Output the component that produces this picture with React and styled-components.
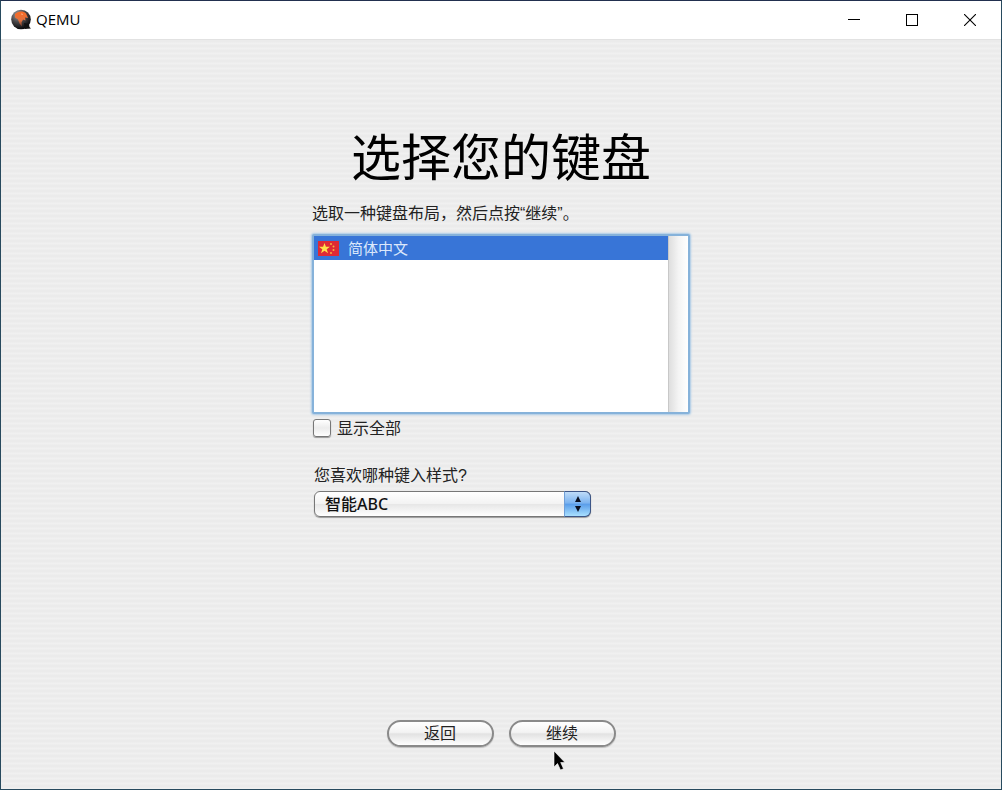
import React, { useState } from 'react';
import styled, { createGlobalStyle } from 'styled-components';

const GlobalStyle = createGlobalStyle`
  * {
    box-sizing: border-box;
  }

  body {
    margin: 0;
    font-family: "Open Sans", "Noto Sans CJK SC", sans-serif;
    font-size: 16px;
    color: #222;
  }
`;

const Window = styled.div`
  display: flex;
  flex-direction: column;
  min-height: 100vh;
  border: 1px solid #274a5e;
  border-top-color: #22304f;
`;

const TitleBar = styled.header`
  display: flex;
  align-items: center;
  height: 39px;
  padding: 0 2px 0 9px;
  background: #fff;
  border-bottom: 1px solid #e2e2e2;
`;

const AppName = styled.div`
  flex: 1;
  margin-left: 4px;
  padding-bottom: 2px;
  font-size: 15px;
  line-height: 20px;
  color: #000;
`;

const WindowButton = styled.button`
  display: flex;
  align-items: center;
  justify-content: center;
  width: 58px;
  height: 38px;
  padding: 0;
  border: 0;
  background: none;
`;

const Screen = styled.main`
  display: flex;
  flex: 1;
  flex-direction: column;
  align-items: center;
  padding: 84px 20px 42px;
  background: repeating-linear-gradient(#ebebeb 0 2px, #f0f0f0 3px 4px, #ebebeb 5px);
`;

const Title = styled.h1`
  margin: 0;
  font-family: "Noto Sans CJK SC", sans-serif;
  font-size: 50px;
  line-height: 60px;
  font-weight: 400;
  color: #000;
`;

const Form = styled.div`
  width: 100%;
  max-width: 378px;
  margin-top: 20px;
`;

const Text = styled.p`
  margin: 0;
  font-family: "Liberation Sans", "Noto Sans CJK SC", sans-serif;
  line-height: 20px;
`;

const ListBox = styled.div`
  display: flex;
  height: 180px;
  margin-top: 10px;
  border: 2px solid #86b2da;
  border-radius: 2px;
  box-shadow: 0 0 2px 1px #a9c9e6;
  background: #fff;
`;

const Options = styled.ul`
  flex: 1;
  margin: 0;
  padding: 0;
  list-style: none;
`;

const Option = styled.li`
  display: flex;
  align-items: center;
  gap: 9px;
  height: 24px;
  padding-left: 4px;
  font-size: 15px;
  line-height: 24px;
  color: ${props => (props['aria-selected'] ? '#dce8fb' : '#222')};
  background: ${props => (props['aria-selected'] ? '#3875d7' : 'transparent')};
`;

const ScrollTrack = styled.div`
  width: 20px;
  border-left: 1px solid #c8c8c8;
  background: linear-gradient(90deg, #dedede, #f4f4f4 50%, #fff);
`;

const CheckLabel = styled.label`
  display: flex;
  align-items: center;
  gap: 6px;
  margin-top: 4px;
  padding-left: 1px;
  line-height: 20px;
`;

const CheckBox = styled.input`
  appearance: none;
  width: 18px;
  height: 18px;
  margin: 0;
  border: 1px solid #777;
  border-radius: 3px;
  box-shadow: 0 1px 1px rgba(0, 0, 0, .35);
  background: linear-gradient(#fff, #ececec 50%, #fff);

  &:checked {
    background: #5b9be6;
  }
`;

const FieldLabel = styled.label`
  display: block;
  margin: 28px 0 5px 2px;
  font-family: "Liberation Sans", "Noto Sans CJK SC", sans-serif;
  line-height: 20px;
`;

const SelectWrap = styled.div`
  position: relative;
  width: 277px;
  max-width: 100%;
  margin-left: 2px;
`;

const Select = styled.select`
  appearance: none;
  display: block;
  width: 100%;
  height: 26px;
  padding: 0 36px 0 10px;
  border: 1px solid #777;
  border-radius: 6px;
  box-shadow: 0 1px 1px rgba(0, 0, 0, .35);
  background: linear-gradient(#fff, #f3f3f3 48%, #e7e7e7 52%, #fff);
  font-family: "Noto Sans", "Noto Sans CJK SC", sans-serif;
  font-size: 16px;
  font-weight: 500;
  color: #111;
`;

const SelectCap = styled.div`
  position: absolute;
  top: 0;
  right: 0;
  display: flex;
  align-items: center;
  justify-content: center;
  width: 27px;
  height: 26px;
  border: 1px solid #3d5687;
  border-left-color: #6f9fd8;
  border-radius: 0 6px 6px 0;
  background: linear-gradient(#bfdcf8, #7db4f0 45%, #5c9fea 52%, #a9e0ff);
  pointer-events: none;
`;

const Footer = styled.footer`
  position: relative;
  display: flex;
  gap: 15px;
  margin-top: auto;
`;

const PillButton = styled.button`
  width: 107px;
  height: 27px;
  padding: 0 0 2px;
  border: 2px solid #8a8a8a;
  border-radius: 14px;
  box-shadow: 0 1px 1px rgba(0, 0, 0, .2);
  background: linear-gradient(#fff, #f3f3f3 45%, #e2e2e2 52%, #fff);
  font-family: inherit;
  font-size: 16px;
  line-height: 20px;
  color: #222;
`;

const Pointer = styled.svg`
  position: absolute;
  top: 30px;
  left: 166px;
`;

const QemuLogo = () => (
  <svg width="22" height="22" viewBox="0 0 22 22" aria-hidden="true">
    <defs>
      <radialGradient id="ball" cx="35%" cy="25%" r="75%">
        <stop offset="0" stopColor="#a5a5a8" />
        <stop offset=".5" stopColor="#4a484a" />
        <stop offset="1" stopColor="#0b0b0d" />
      </radialGradient>
      <linearGradient id="flame" x1="0" y1="0" x2="0" y2="1">
        <stop offset="0" stopColor="#fa6a22" />
        <stop offset=".6" stopColor="#e0713f" />
        <stop offset="1" stopColor="#6b3a2c" />
      </linearGradient>
    </defs>
    <circle cx="11" cy="10.500" r="9.800" fill="url(#ball)" />
    <path d="M14 14l5 1 .5 3 1.500 1.500-6 .5z" fill="#111" />
    <path d="M5 5C8 2 13 1.500 16 4.500l2 4.500-3-.5.500 3-2.500-1-1.500 3 .5 4-2.500-3-1.500-4L5 8.500z" fill="url(#flame)" />
    <path d="M11 4.500l2 .5-1 1z" fill="#fff" opacity=".7" />
  </svg>
);

const Flag = () => (
  <svg width="21" height="15" viewBox="0 0 21 15" aria-hidden="true">
    <rect width="21" height="15" fill="#de2a35" />
    <path d="M6.500 2l1.400 3.700h4L8.700 8.200 10 12.200 6.500 9.800 3 12.200l1.300-4L1 5.700h4.100z" fill="#ffe14a" />
    <g fill="#f6b13c">
      <circle cx="13" cy="3" r="1" />
      <circle cx="15.500" cy="5.500" r="1" />
      <circle cx="15.500" cy="9" r="1" />
      <circle cx="13" cy="12" r="1" />
    </g>
  </svg>
);

export default () => {
  const [showAll, setShowAll] = useState(false);

  return (
    <Window>
      <GlobalStyle />
      <TitleBar>
        <QemuLogo />
        <AppName>QEMU</AppName>
        <WindowButton aria-label="最小化">
          <svg width="12" height="12" shapeRendering="crispEdges">
            <path d="M0 5.500h12" stroke="#000" />
          </svg>
        </WindowButton>
        <WindowButton aria-label="最大化">
          <svg width="12" height="12" shapeRendering="crispEdges">
            <rect x=".5" y=".5" width="11" height="11" fill="none" stroke="#000" />
          </svg>
        </WindowButton>
        <WindowButton aria-label="关闭">
          <svg width="12" height="12">
            <path d="M0 0l12 12M12 0L0 12" stroke="#000" strokeWidth="1.100" />
          </svg>
        </WindowButton>
      </TitleBar>

      <Screen>
        <Title>选择您的键盘</Title>
        <Form>
          <Text>选取一种键盘布局，然后点按“继续”。</Text>
          <ListBox>
            <Options role="listbox" aria-label="键盘布局">
              <Option role="option" aria-selected>
                <Flag />
                简体中文
              </Option>
            </Options>
            <ScrollTrack />
          </ListBox>
          <CheckLabel>
            <CheckBox
              type="checkbox"
              checked={showAll}
              onChange={e => setShowAll(e.target.checked)}
            />
            显示全部
          </CheckLabel>
          <FieldLabel htmlFor="style">您喜欢哪种键入样式?</FieldLabel>
          <SelectWrap>
            <Select id="style">
              <option>智能ABC</option>
            </Select>
            <SelectCap>
              <svg width="8" height="18" viewBox="0 0 8 18">
                <path d="M4 1l3 6H1zM4 17l3-6H1z" fill="#0a1020" />
              </svg>
            </SelectCap>
          </SelectWrap>
        </Form>

        <Footer>
          <PillButton>返回</PillButton>
          <PillButton>继续</PillButton>
          <Pointer width="14" height="22" viewBox="0 0 14 22" aria-hidden="true">
            <path d="M1 1v16l3.500-3.500L7.500 20l3-1.300L7.700 12.500H12z" fill="#000" stroke="#fff" strokeWidth=".6" />
          </Pointer>
        </Footer>
      </Screen>
    </Window>
  );
};
